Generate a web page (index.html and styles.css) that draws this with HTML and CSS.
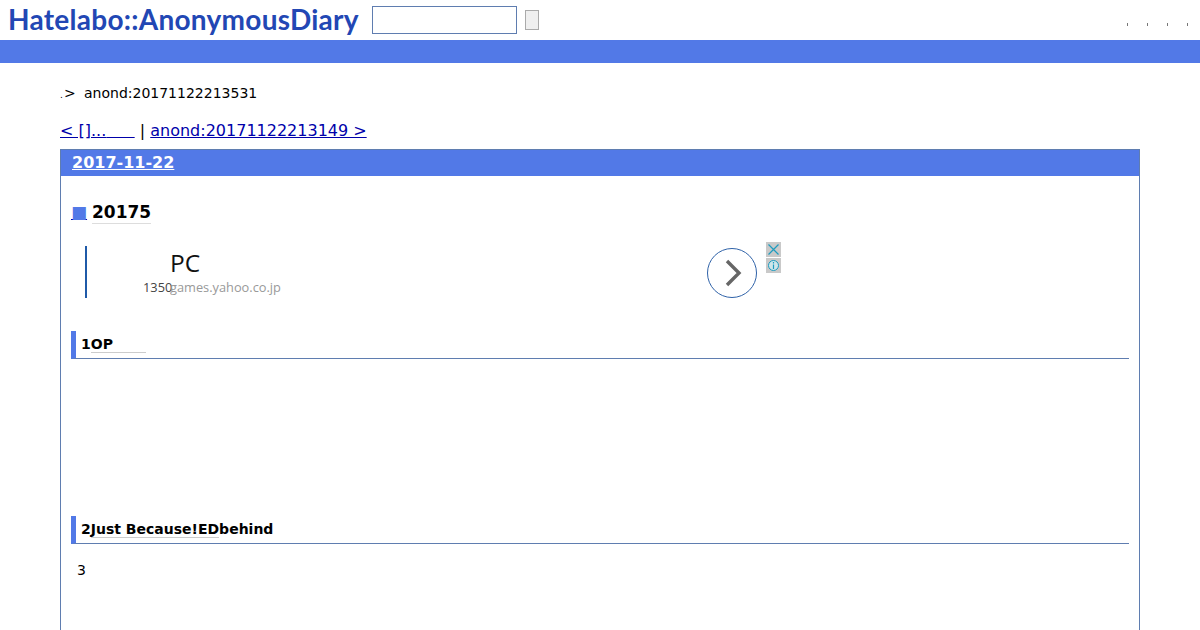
FILE: index.html
```html
<!DOCTYPE html>
<html lang="ja">
<head>
<meta charset="utf-8">
<title>anond:20171122213531</title>
<link rel="stylesheet" href="styles.css">
</head>
<body>
<header class="top">
  <a class="logo">Hatelabo::AnonymousDiary</a>
  <input class="search" type="text">
  <button class="go" type="button"></button>
  <nav class="dots"><span></span><span></span><span></span><span></span></nav>
</header>
<div class="band"></div>
<main class="page">
  <p class="crumb"><span class="tiny">.</span><span class="gt">&gt;</span><span>anond:20171122213531</span></p>
  <p class="pager"><a href="#">&lt; []...<span class="gap">&nbsp;&nbsp;&nbsp;&nbsp;&nbsp;</span></a> | <a href="#">anond:20171122213149 &gt;</a></p>
  <section class="day">
    <h2 class="date"><a href="#">2017-11-22</a></h2>
    <div class="body">
      <h3 class="title"><a class="square" href="#">■</a><span class="title-text">20175</span></h3>
      <aside class="ad">
        <div class="ad-bar"></div>
        <div class="ad-copy">
          <div class="ad-head">PC</div>
          <div class="ad-sub"><span class="ad-num">1350</span><span class="ad-url">games.yahoo.co.jp</span></div>
        </div>
        <svg class="ad-arrow" width="50" height="50" viewBox="0 0 50 50"><circle cx="25" cy="25" r="24.5" fill="#fff" stroke="#2f62a8" stroke-width="1"/><path d="M20 13 L32 25 L20 37" fill="none" stroke="#666" stroke-width="3.4"/></svg>
        <div class="ad-tools">
          <svg width="15" height="15" viewBox="0 0 15 15"><rect width="15" height="15" fill="#c9c9c9"/><path d="M2.5 2.5 L12.5 12.5 M12.5 2.5 L2.5 12.5" stroke="#1d9cc0" stroke-width="1.2"/></svg>
          <svg width="15" height="15" viewBox="0 0 15 15"><rect width="15" height="15" fill="#c9c9c9"/><circle cx="7.5" cy="7.5" r="5" fill="#cfe6ea" stroke="#1d9cc0" stroke-width="1"/><path d="M7.5 6.5 V11 M7.5 4 V5.4" stroke="#1d9cc0" stroke-width="1.2"/></svg>
        </div>
      </aside>
      <h4 class="sec first">1<span class="kw kw-op">OP</span></h4>
      <h4 class="sec second">2<span class="kw">Just Because!ED</span>behind</h4>
      <p class="para">3</p>
    </div>
  </section>
</main>
</body>
</html>
```
FILE: styles.css
```css
html, body { margin: 0; padding: 0; height: 630px; overflow: hidden; background: #fff; }
body { font-family: "DejaVu Sans", sans-serif; color: #000; font-size: 14px; }
p, h2, h3, h4 { margin: 0; }

.top { height: 40px; display: flex; align-items: center; padding-left: 8px; box-sizing: border-box; }
.logo { width: 350px; margin-top: -3px; font-family: "Lato", sans-serif; font-weight: 700; font-size: 28px; color: #2247b4; letter-spacing: 0.27px; white-space: nowrap; }
.search { width: 145px; height: 28px; box-sizing: border-box; margin: 0 0 0 14px; border: 1px solid #5f7db0; background: #fff; padding: 0; }
.go { width: 14px; height: 20px; margin: 0 0 0 8px; padding: 0; border: 1px solid #aaa; background: #efefef; }
.dots { margin-left: auto; display: flex; gap: 19px; padding: 8px 12px 0 0; }
.dots span { width: 1px; height: 3px; background: #777; }

.band { height: 23px; background: #5279e7; }

.page { padding: 22px 60px 0; }
.crumb { display: flex; align-items: baseline; height: 16px; line-height: 16px; }
.tiny { font-size: 9px; width: 4px; }
.gt { width: 20px; margin-bottom: 1px; }
.pager { margin-top: 20px; font-size: 16px; line-height: 19px; height: 19px; }
.pager a { color: #00a; }
.gap { letter-spacing: 0.6px; }

.day { margin-top: 9px; border: 1px solid #5f7db0; border-bottom: 0; height: 481px; box-sizing: border-box; }
.date { background: #5279e7; height: 26px; margin-top: 0; padding-left: 11px; font-size: 16px; line-height: 25px; font-weight: 700; }
.date a { color: #fff; }
.body { padding: 0 10px; }
.title { margin-top: 26px; height: 22px; font-size: 17px; line-height: 20px; font-weight: 700; display: flex; align-items: flex-start; }
.square { color: #5279e7; font-size: 17px; text-decoration: underline; text-decoration-color: #00a; width: 21px; line-height: 20px; }
.title-text { border-bottom: 1px solid #ddd; padding-bottom: 1px; }

.ad { margin: 18px 0 0 14px; width: 696px; height: 60px; display: flex; align-items: flex-start; }
.ad-bar { width: 2px; height: 52px; background: #1f5aa8; margin-top: 4px; }
.ad-copy { width: 620px; padding-left: 56px; box-sizing: border-box; }
.ad-head { font-family: "Open Sans", sans-serif; font-size: 24.5px; line-height: 32px; margin: 5px 0 0 27px; color: #111; }
.ad-sub { display: flex; margin-top: -1px; font-family: "Open Sans", sans-serif; font-size: 12.8px; line-height: 18px; }
.ad-num { width: 27px; color: #444; white-space: nowrap; }
.ad-url { color: #999; white-space: nowrap; }
.ad-arrow { margin-top: 6px; }
.ad-tools { display: flex; flex-direction: column; gap: 1px; margin-left: 9px; }
.ad-tools svg { display: block; }

.sec { border-left: 5px solid #5279e7; border-bottom: 1px solid #5f7db0; height: 28px; box-sizing: border-box; padding: 5px 0 0 5px; font-size: 14px; line-height: 16px; font-weight: 700; }
.first { margin-top: 29px; }
.second { margin-top: 157px; }
.kw { border-bottom: 1px solid #ccc; }
.kw-op { padding-right: 33px; }
.para { margin: 18px 0 0 6px; line-height: 16px; }
```
